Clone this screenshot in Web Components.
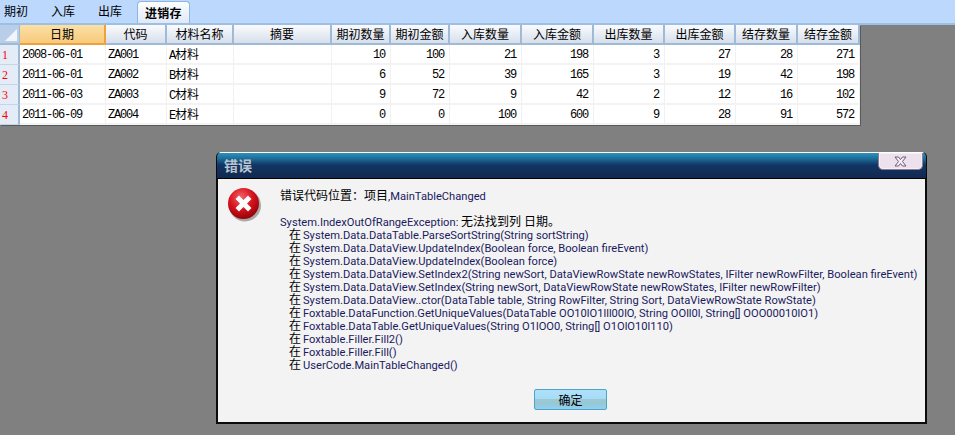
<!DOCTYPE html>
<html lang="zh"><head><meta charset="utf-8"><title>进销存</title>
<style>
html,body{margin:0;padding:0;height:100%;background:#808080;overflow:hidden}
body{font:12px "Noto Sans CJK SC",sans-serif;color:#000}
</style></head><body>
<x-app>
  <x-tabs>
    <x-tab>期初</x-tab><x-tab>入库</x-tab><x-tab>出库</x-tab><x-tab active>进销存</x-tab>
  </x-tabs>
  <x-grid></x-grid>
  <x-dialog heading="错误">
    <x-error-icon slot="icon"></x-error-icon>
    <x-msg><b>错误代码位置:项目</b>,MainTableChanged</x-msg>
    <x-msg class="gap"></x-msg>
    <x-msg>System.IndexOutOfRangeException: <b>无法找到列 日期。</b></x-msg>
    <x-msg trace>System.Data.DataTable.ParseSortString(String sortString)</x-msg>
    <x-msg trace>System.Data.DataView.UpdateIndex(Boolean force, Boolean fireEvent)</x-msg>
    <x-msg trace>System.Data.DataView.UpdateIndex(Boolean force)</x-msg>
    <x-msg trace>System.Data.DataView.SetIndex2(String newSort, DataViewRowState newRowStates, IFilter newRowFilter, Boolean fireEvent)</x-msg>
    <x-msg trace>System.Data.DataView.SetIndex(String newSort, DataViewRowState newRowStates, IFilter newRowFilter)</x-msg>
    <x-msg trace>System.Data.DataView..ctor(DataTable table, String RowFilter, String Sort, DataViewRowState RowState)</x-msg>
    <x-msg trace>Foxtable.DataFunction.GetUniqueValues(DataTable OO10lO1lll00lO, String OOll0l, String[] OOO00010lO1)</x-msg>
    <x-msg trace>Foxtable.DataTable.GetUniqueValues(String O1lOO0, String[] O1OlO10l110)</x-msg>
    <x-msg trace>Foxtable.Filler.Fill2()</x-msg>
    <x-msg trace>Foxtable.Filler.Fill()</x-msg>
    <x-msg trace>UserCode.MainTableChanged()</x-msg>
    <x-button slot="actions">确定</x-button>
  </x-dialog>
</x-app>
<script>
function def(name, css, html, init){
  customElements.define(name, class extends HTMLElement{
    constructor(){super();const s=this.attachShadow({mode:'open'});s.innerHTML='<style>'+css+'</style>'+html;}
    connectedCallback(){ if(init) init.call(this,this.shadowRoot); }
  });
}
document.querySelector('x-msg b').textContent='错误代码位置:项目'.replace(':','\uFF1A');
const CJK='"Noto Sans CJK SC",sans-serif';
def('x-app',':host{display:block;position:relative;width:955px;height:435px;background:#808080}','<slot></slot>');
def('x-tabs',`:host{display:flex;height:23px;padding-left:4px;gap:23px;background:#bcd9fd;border-bottom:2px solid #9dbfe3;box-sizing:content-box;font:12px/22px ${CJK}}`,'<slot></slot>');
def('x-tab',`:host{display:block;color:#000}
:host([active]){margin:1px 0 -1px -8px;padding:0 7px;height:22px;line-height:21px;font-weight:700;background:linear-gradient(#fdfeff,#dfe9f6);border:1px solid #8fb6de;border-bottom:0;border-radius:4px 4px 0 0;box-sizing:border-box;width:53px;white-space:nowrap;letter-spacing:.2px}`,'<slot></slot>');
const cols=[20,86,61,67,98,59,59,72,72,71,71,62,62];
const heads=['日期','代码','材料名称','摘要','期初数量','期初金额','入库数量','入库金额','出库数量','出库金额','结存数量','结存金额'];
const rows=[['2008-06-01','ZA001','A材料','',10,100,21,198,3,27,28,271],
['2011-06-01','ZA002','B材料','',6,52,39,165,3,19,42,198],
['2011-06-03','ZA003','C材料','',9,72,9,42,2,12,16,102],
['2011-06-09','ZA004','E材料','',0,0,100,600,9,28,91,572]];
def('x-grid',`:host{display:grid;width:860px;grid-template-columns:${cols.map(c=>c+'px').join(' ')};grid-auto-rows:20px;background:#fff;box-shadow:1px 1px 0 #5a5a5a;font:12px/19px ${CJK}}
div{box-sizing:border-box;white-space:nowrap}
.h{height:20px;text-align:center;background:linear-gradient(#fafbfd,#d6dfec);border-right:2px solid #9fbad6;border-bottom:2px solid #9fbad6;line-height:18px;color:#000}
.sel{background:linear-gradient(#fbe0a6,#f7ca7c);border:0 solid #f0a13c;border-width:0 2px 2px 0}
.corner{background:#b9cee8;border-right:1px solid #9fbad6;border-bottom:2px solid #9fbad6;padding:3px 2px 3px 4px}
.corner svg{display:block}
.r{background:#e4ecf7;border-right:2px solid #9fbad6;border-bottom:1px solid #c5d5e8;color:#f00;padding-left:2px;font:12px/21px "Liberation Serif",serif}
.c{border-right:1px solid #f1f1f1;border-bottom:2px solid #f3f3f3;padding:0 4px 0 2px;font-family:"Liberation Mono",${CJK};letter-spacing:-1.2px;line-height:20px}
.t{letter-spacing:0;font-family:${CJK};line-height:17px}
.t i{font:12px "Liberation Mono",monospace;letter-spacing:-1.2px}
.n{text-align:right;padding-right:5px}`,'<div id="g" style="display:contents"></div>',function(s){
  let h='<div class="corner"><svg width="13" height="13"><path d="M13 1V13H1Z" fill="#f2f5fa"/></svg></div>';
  heads.forEach((t,i)=>h+=`<div class="h${i==0?' sel':''}">${t}</div>`);
  rows.forEach((r,ri)=>{h+=`<div class="r">${ri+1}</div>`;
    r.forEach((v,i)=>{ if(i==2) h+=`<div class="c t"><i>${String(v)[0]}</i>材料</div>`;
      else h+=`<div class="c${i>3?' n':''}">${v}</div>`;});
  });
  s.getElementById('g').innerHTML=h;
});
def('x-dialog',`:host{display:flex;flex-direction:column;position:absolute;left:216px;top:152px;width:711px;height:272px;box-sizing:border-box;border:2px solid #0b0b0b;border-top:0;border-radius:5px 5px 0 0;background:#f3f3f3}
.bar{height:26px;margin:0 -1px;display:flex;justify-content:space-between;background:linear-gradient(#fff 0,#fff 1px,#2b93bb 1px,#1c6a96 7px,#123564 13px,#11294f 26px);border-bottom:1px solid #000;border-radius:5px 5px 0 0;box-sizing:content-box;font:700 14px/26px ${CJK};color:#b9c4cf;padding-left:7px}
.close{margin:1px 3px 0 0;width:43px;height:16px;background:#eee1ee;border:1px solid #8d7b90;border-top:0;border-radius:0 0 5px 5px;display:flex;align-items:center;justify-content:center;box-shadow:inset 0 0 0 1px #f7eff7}
.main{flex:1;display:flex;padding:8px 10px 0 9px;min-height:0}
.ic{width:53px;flex:none}
.txt{padding-top:3px}
.act{display:flex;justify-content:center;padding:0 0 12px 0}`,
`<div class="bar"><span id="h"></span><span class="close"><svg width="13" height="11" viewBox="0 0 13 11"><path d="M1 1H4.5L6.5 3.5 8.5 1H12L8.500 5.500 12 10H8.500L6.500 7.500 4.500 10H1L4.500 5.500Z" fill="#f6eef6" stroke="#6e5a78" stroke-width="1"/></svg></span></div>
<div class="main"><div class="ic"><slot name="icon"></slot></div><div class="txt"><slot></slot></div></div>
<div class="act"><slot name="actions"></slot></div>`,function(s){s.getElementById('h').textContent=this.getAttribute('heading');});
def('x-msg',`:host{display:block;height:13px;font:11.15px/13px Roboto,${CJK};color:#1a1a60;white-space:nowrap}
:host([trace]){padding-left:9px}
::slotted(b){font-weight:400;font-size:12px;color:#000}
.z{color:#000;display:inline-block;width:14px;font-size:12px}`,'<span id="z"></span><slot></slot>',function(s){ if(this.hasAttribute('trace')){const z=s.getElementById('z');z.className='z';z.textContent='在';} });
def('x-error-icon',`:host{display:block;width:35px;height:35px}svg{display:block}`,
`<svg width="35" height="35" viewBox="0 0 35 35"><defs><radialGradient id="r" cx=".42" cy=".3" r=".75"><stop offset="0" stop-color="#f2636a"/><stop offset=".5" stop-color="#d8141d"/><stop offset="1" stop-color="#8c0007"/></radialGradient></defs><circle cx="18" cy="18.500" r="16" fill="#777" opacity=".6"/><circle cx="16.500" cy="16.500" r="15.500" fill="url(#r)"/><path d="M8.500 12L12 8.500 16.500 13 21 8.500 24.500 12 20 16.500 24.500 21 21 24.500 16.500 20 12 24.500 8.500 21 13 16.500Z" fill="#fff"/></svg>`);
def('x-button',`:host{display:block;width:73px;height:21px;box-sizing:border-box;margin-left:-2px;text-align:center;border:1px solid #4fa4c6;border-radius:2px;background:linear-gradient(#aee0fa 0,#a6dcf8 45%,#9cc8d2 50%,#96c8d8 75%,#8fd2f3 100%);font:12px/19px ${CJK};color:#000}`,'<slot></slot>');
</script>
</body></html>
